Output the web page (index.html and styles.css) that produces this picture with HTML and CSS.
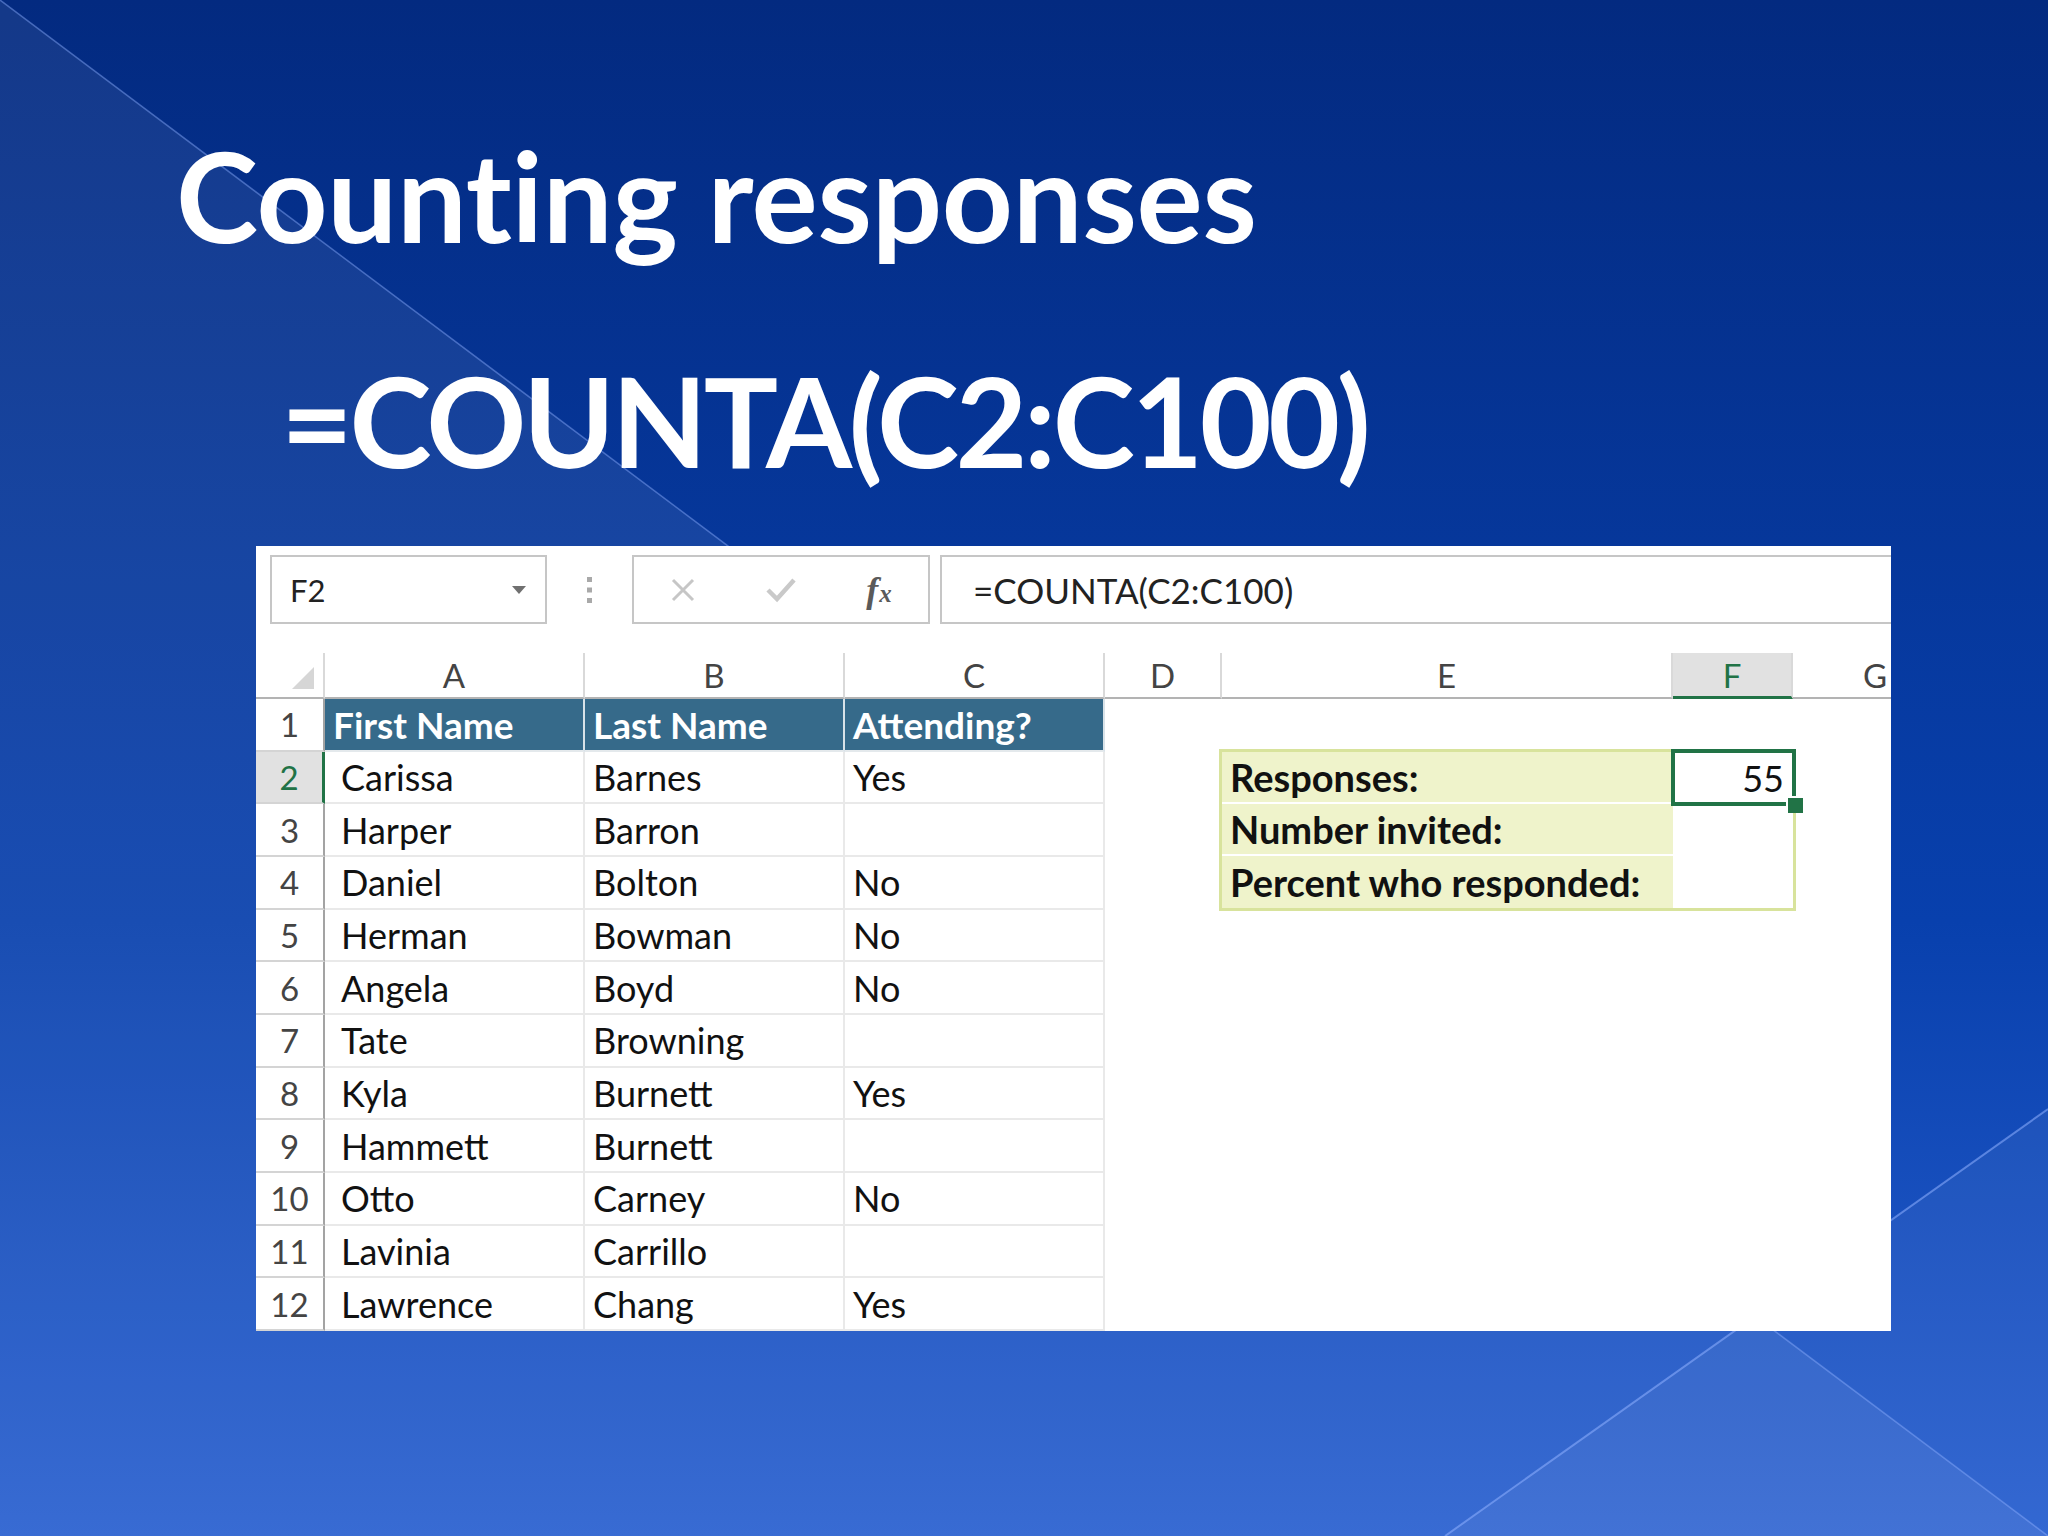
FILE: index.html
```html
<!DOCTYPE html>
<html lang="en">
<head>
<meta charset="utf-8">
<title>Counting responses</title>
<link rel="stylesheet" href="styles.css">
</head>
<body>
<svg class="bg" viewBox="0 0 2048 1536" width="2048" height="1536" aria-hidden="true">
  <defs>
    <linearGradient id="bgGrad" x1="0" y1="0" x2="0" y2="1">
      <stop offset="0" stop-color="#032a80"/>
      <stop offset="0.6" stop-color="#0840ad"/>
      <stop offset="1" stop-color="#2960d0"/>
    </linearGradient>
  </defs>
  <rect width="2048" height="1536" fill="url(#bgGrad)"/>
  <polygon points="0,0 2048,1536 0,1536" fill="#ffffff" fill-opacity="0.07"/>
  <polygon points="2048,1109 2048,1536 1445,1536" fill="#ffffff" fill-opacity="0.05"/>
  <line x1="0" y1="0" x2="2048" y2="1536" stroke="#8fb0ff" stroke-opacity="0.45" stroke-width="1.5"/>
  <line x1="2048" y1="1109" x2="1445" y2="1536" stroke="#8fb0ff" stroke-opacity="0.55" stroke-width="2"/>
</svg>

<main class="slide">
  <h1 class="title">Counting responses</h1>
  <p class="formula">=COUNTA(C2:C100)</p>

  <section class="sheet">
    <div class="fbar">
      <div class="namebox">
        <span>F2</span>
        <svg class="arrow" width="14" height="8" viewBox="0 0 14 8"><polygon points="0,0 14,0 7,8" fill="#707070"/></svg>
      </div>
      <div class="grip">
        <svg width="5" height="26" viewBox="0 0 5 26"><rect x="0" y="0" width="5" height="5" fill="#a9a9a9"/><rect x="0" y="10.5" width="5" height="5" fill="#a9a9a9"/><rect x="0" y="21" width="5" height="5" fill="#a9a9a9"/></svg>
      </div>
      <div class="btns">
        <span class="btn"><svg width="24" height="24" viewBox="0 0 24 24"><path d="M2 2 L22 22 M22 2 L2 22" stroke="#c6c6c6" stroke-width="3" fill="none"/></svg></span>
        <span class="btn"><svg width="30" height="26" viewBox="0 0 30 26"><path d="M2 13 L11 22 L28 3" stroke="#c9c9c9" stroke-width="4.5" fill="none"/></svg></span>
        <span class="btn fx"><i>f</i><i class="x">x</i></span>
      </div>
      <div class="finput">=COUNTA(C2:C100)</div>
    </div>

    <div class="grid">
      <div class="ch corner"></div>
      <div class="ch">A</div>
      <div class="ch">B</div>
      <div class="ch">C</div>
      <div class="ch">D</div>
      <div class="ch">E</div>
      <div class="ch selcol">F</div>
      <div class="ch colg">G</div>

      <div class="ebox">
        <div class="lab">Responses:</div><div class="val sel">55</div>
        <div class="lab">Number invited:</div><div class="val"></div>
        <div class="lab last">Percent who responded:</div><div class="val"></div>
      </div>

      <div class="rh">1</div>
      <div class="hd">First Name</div>
      <div class="hd">Last Name</div>
      <div class="hd">Attending?</div>
      <div class="blank"></div><div class="blank"></div><div class="blank"></div><div class="blank"></div>

      <div class="rh selrow">2</div>
      <div class="c a">Carissa</div><div class="c">Barnes</div><div class="c">Yes</div>
      <div class="blank"></div><div class="blank"></div>

      <div class="rh">3</div>
      <div class="c a">Harper</div><div class="c">Barron</div><div class="c"></div>
      <div class="blank"></div><div class="blank"></div>

      <div class="rh">4</div>
      <div class="c a">Daniel</div><div class="c">Bolton</div><div class="c">No</div>
      <div class="blank"></div><div class="blank"></div>

      <div class="rh">5</div>
      <div class="c a">Herman</div><div class="c">Bowman</div><div class="c">No</div>
      <div class="blank"></div><div class="blank"></div><div class="blank"></div><div class="blank"></div>

      <div class="rh">6</div>
      <div class="c a">Angela</div><div class="c">Boyd</div><div class="c">No</div>
      <div class="blank"></div><div class="blank"></div><div class="blank"></div><div class="blank"></div>

      <div class="rh">7</div>
      <div class="c a">Tate</div><div class="c">Browning</div><div class="c"></div>
      <div class="blank"></div><div class="blank"></div><div class="blank"></div><div class="blank"></div>

      <div class="rh">8</div>
      <div class="c a">Kyla</div><div class="c">Burnett</div><div class="c">Yes</div>
      <div class="blank"></div><div class="blank"></div><div class="blank"></div><div class="blank"></div>

      <div class="rh">9</div>
      <div class="c a">Hammett</div><div class="c">Burnett</div><div class="c"></div>
      <div class="blank"></div><div class="blank"></div><div class="blank"></div><div class="blank"></div>

      <div class="rh">10</div>
      <div class="c a">Otto</div><div class="c">Carney</div><div class="c">No</div>
      <div class="blank"></div><div class="blank"></div><div class="blank"></div><div class="blank"></div>

      <div class="rh">11</div>
      <div class="c a">Lavinia</div><div class="c">Carrillo</div><div class="c"></div>
      <div class="blank"></div><div class="blank"></div><div class="blank"></div><div class="blank"></div>

      <div class="rh">12</div>
      <div class="c a">Lawrence</div><div class="c">Chang</div><div class="c">Yes</div>
      <div class="blank"></div><div class="blank"></div><div class="blank"></div><div class="blank"></div>
    </div>
  </section>
</main>
</body>
</html>
```

FILE: styles.css
```css
* { box-sizing: border-box; }
html, body { margin: 0; padding: 0; }
body {
  width: 2048px;
  height: 1536px;
  overflow: hidden;
  position: relative;
  background: #0a3aa0;
  font-family: Lato, "Liberation Sans", sans-serif;
}
.bg { position: absolute; left: 0; top: 0; z-index: 0; display: block; }

.slide { position: relative; z-index: 1; padding-top: 133px; }

.title {
  margin: 0 0 0 176px;
  height: 124px;
  font: 700 124px/1 Lato, "Liberation Sans", sans-serif;
  color: #fff;
  white-space: nowrap;
  letter-spacing: -0.3px;
}
.formula {
  margin: 101px 0 0 281px;
  height: 124px;
  font: 700 124px/1 Lato, "Liberation Sans", sans-serif;
  color: #fff;
  white-space: nowrap;
  letter-spacing: -3.4px;
}

.sheet {
  margin: 64px 0 0 256px;
  width: 1635px;
  height: 785px;
  background: #fff;
  padding-top: 9px;
  overflow: hidden;
}

/* formula bar */
.fbar { display: flex; height: 69px; }
.namebox {
  margin-left: 14px;
  width: 277px;
  border: 2px solid #c6c6c6;
  display: flex;
  align-items: center;
  justify-content: space-between;
  padding: 0 19px 0 18px;
  font-size: 31px;
  color: #222;
}
.grip { width: 85px; display: flex; align-items: center; justify-content: center; }
.btns {
  width: 298px;
  border: 2px solid #c6c6c6;
  display: grid;
  grid-template-columns: repeat(3, 1fr);
  align-items: center;
  justify-items: center;
}
.btn { display: flex; align-items: center; justify-content: center; }
.fx {
  font-family: "Liberation Serif", "DejaVu Serif", serif;
  color: #5a5a5a;
  font-size: 36px;
  font-weight: 700;
}
.fx i { font-style: italic; }
.fx .x { font-size: 25px; margin-left: 1px; margin-top: 8px; }
.finput {
  margin-left: 10px;
  flex: 1;
  border: 2px solid #c6c6c6;
  border-right: none;
  display: flex;
  align-items: center;
  padding-left: 31px;
  font-size: 35px;
  color: #222;
}

/* grid */
.grid {
  display: grid;
  grid-template-columns: 69px 260px 260px 260px 117px 451px 120px 98px;
  grid-template-rows: 46px repeat(12, 1fr);
  height: 678px;
  margin-top: 29px;
  font-size: 36px;
  color: #111;
}
.grid > div, .ebox > div { display: flex; align-items: center; white-space: nowrap; }

.ch {
  justify-content: center;
  color: #444;
  font-size: 33px;
  border-right: 2px solid #d9d9d9;
  border-bottom: 2px solid #b3b3b3;
}
.ch.colg { justify-content: flex-start; padding-left: 70px; border-right: none; }
.corner { position: relative; }
.corner::after {
  content: "";
  position: absolute;
  right: 9px;
  bottom: 8px;
  width: 0; height: 0;
  border-left: 22px solid transparent;
  border-bottom: 22px solid #d6d6d6;
}
.selcol {
  background: #e1e1e1;
  color: #217346;
  border-bottom: 3px solid #217346;
}

.rh {
  justify-content: center;
  color: #444;
  font-size: 33px;
  border-right: 2px solid #a3a3a3;
  border-bottom: 2px solid #d4d4d4;
}
.selrow {
  background: #e1e1e1;
  color: #217346;
  border-right: 3px solid #217346;
}

.hd {
  background: #366a8a;
  color: #fff;
  font-weight: 700;
  font-size: 37px;
  padding-left: 8px;
  border-right: 2px solid #d8e2e8;
  border-bottom: 2px solid #e4e9ec;
}
.c {
  padding-left: 8px;
  border-right: 2px solid #e9e9e9;
  border-bottom: 2px solid #e9e9e9;
}
.c.a { padding-left: 16px; }

/* E2:F4 block */
.grid > .ebox {
  grid-row: 3 / 6;
  grid-column: 6 / 8;
  margin: -3px -3px -1px -3px;
  border: 3px solid #d8e39c;
  display: grid;
  grid-template-columns: 451px 120px;
  grid-template-rows: repeat(3, 1fr);
  align-items: stretch;
}
.lab {
  background: #eff3cb;
  font-weight: 700;
  font-size: 38px;
  padding-left: 8px;
  border-bottom: 2px solid #fff;
}
.lab.last { border-bottom: none; }
.val { justify-content: flex-end; padding-right: 9px; background: #fff; }
.sel { position: relative; }
.sel::before {
  content: "";
  position: absolute;
  left: -2px;
  top: -3px;
  right: -3px;
  bottom: -2px;
  border: 4px solid #217346;
}
.sel::after {
  content: "";
  position: absolute;
  right: -10px;
  bottom: -9px;
  width: 15px;
  height: 15px;
  background: #217346;
  border-left: 2px solid #fff;
  border-top: 2px solid #fff;
}
```
